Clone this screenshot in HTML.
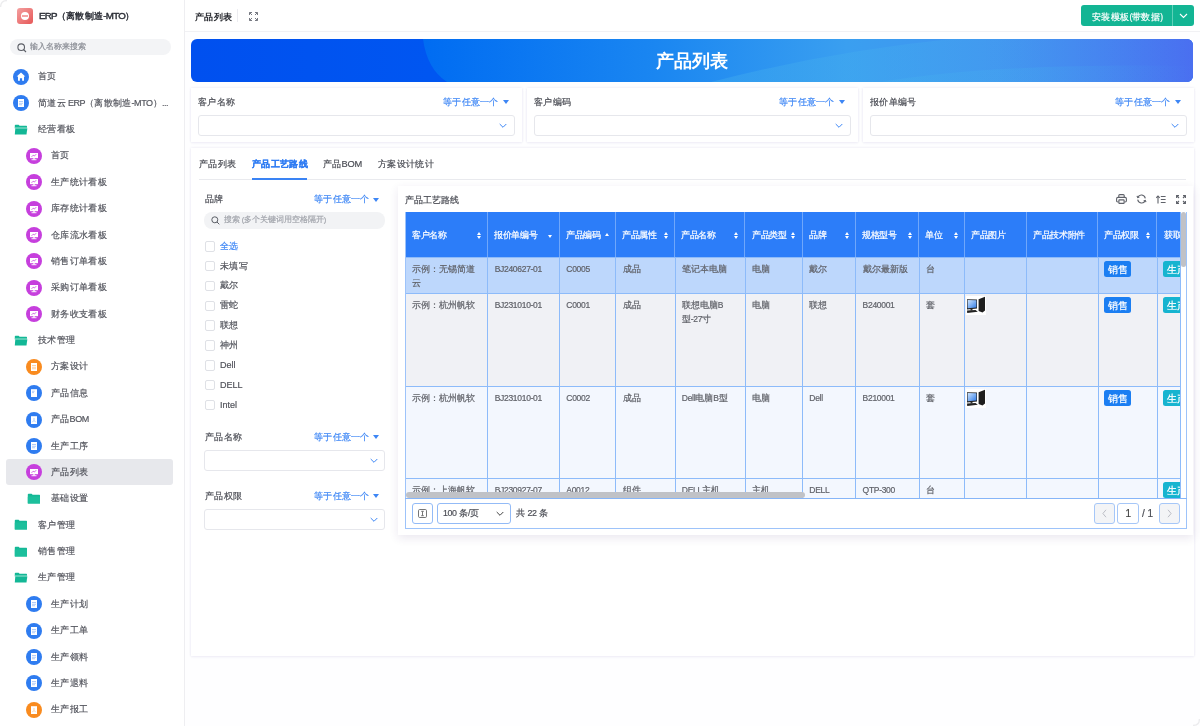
<!DOCTYPE html><html><head><meta charset="utf-8"><style>
*{margin:0;padding:0;box-sizing:border-box}
html,body{width:1200px;height:726px;overflow:hidden}
body{position:relative;background:#fefeff;font-family:"Liberation Sans",sans-serif;color:#4b4d55;font-size:10px;line-height:1;-webkit-text-stroke-width:.2px}
.a{position:absolute;white-space:nowrap}
.ic{position:absolute;width:16px;height:16px}
.card{position:absolute;background:#fff;box-shadow:0 0 2.5px rgba(90,70,160,.13),0 1px 3px rgba(90,70,160,.05)}
.tri{position:absolute;width:0;height:0;border-left:3.8px solid transparent;border-right:3.8px solid transparent;border-top:4.6px solid #3d86f5}
.inp{position:absolute;background:#fff;border:1px solid #e6e7ec;border-radius:3px}
.cb{position:absolute;width:10.5px;height:10.5px;border:1px solid #dfe1e6;border-radius:2px;background:#fff}
</style></head><body><div style="position:absolute;left:0;top:0;width:1200px;height:726px;will-change:transform">
<div class="a" style="left:0;top:0;width:185px;height:726px;background:#fff;border-right:1px solid #eeeef1"></div>
<div class="a" style="left:17px;top:8px;width:16px;height:16px;border-radius:3px;background:linear-gradient(135deg,#f4a0a0,#e65757)"></div>
<div class="a" style="left:20.8px;top:11.5px;width:8.4px;height:8.4px;border-radius:50%;background:#fff"></div>
<div class="a" style="left:22px;top:15px;width:6px;height:1.6px;background:#f3a5a5"></div>
<div class="a" style="left:38.5px;top:11px;font-size:10px;color:#2b2e36;font-weight:normal;transform:scale(0.93);transform-origin:0 0;-webkit-text-stroke-width:.45px"><span style="font-size:10.5px;letter-spacing:-0.8px">ERP</span>（离散制造<span style="font-size:10.5px;letter-spacing:-0.8px">-MTO</span>）</div>
<div class="a" style="left:10px;top:39px;width:161px;height:16px;border-radius:8px;background:#f3f4f6"></div>
<svg class="a" style="left:17px;top:43px" width="10" height="10" viewBox="0 0 10 10"><circle cx="4.2" cy="4.2" r="3.3" fill="none" stroke="#5b5e66" stroke-width="1.1"/><line x1="6.6" y1="6.6" x2="9" y2="9" stroke="#5b5e66" stroke-width="1.1"/></svg>
<div class="a" style="left:30px;top:43px;font-size:8px;color:#8a8d95;font-weight:normal;">输入名称来搜索</div>
<div class="ic" style="left:13px;top:68.80px"><svg width="16" height="16" viewBox="0 0 16 16"><circle cx="8" cy="8" r="8" fill="#2f7cf0"/><path d="M8 3.6 L12.3 7.6 H11 V11.8 H9.1 V9.3 H6.9 V11.8 H5 V7.6 H3.7 Z" fill="#fff"/></svg></div>
<div class="a" style="left:37.7px;top:72.3px;font-size:10px;color:#53555d;font-weight:normal;transform:scale(0.93);transform-origin:0 0;">首页</div>
<div class="ic" style="left:13px;top:95.17px"><svg width="16" height="16" viewBox="0 0 16 16"><circle cx="8" cy="8" r="8" fill="#2f7cf0"/><rect x="5" y="4" width="6" height="8" fill="#fff"/><rect x="6" y="6.2" width="4" height=".8" fill="#9fc0f7"/><rect x="6" y="7.8" width="4" height=".8" fill="#9fc0f7"/><rect x="6" y="9.4" width="3" height=".8" fill="#9fc0f7"/></svg></div>
<div class="a" style="left:37.7px;top:98.67px;font-size:10px;color:#53555d;font-weight:normal;transform:scale(0.93);transform-origin:0 0;">简道云<span style="font-size:9.7px;letter-spacing:-0.5px"> ERP</span>（离散制造<span style="font-size:9.7px;letter-spacing:-0.5px">-MTO</span>）<span style="font-size:9.7px;letter-spacing:-0.5px">...</span></div>
<div class="ic" style="left:13px;top:121.55px"><svg width="16" height="16" viewBox="0 0 16 16"><path d="M1.8 3.6 Q1.8 2.8 2.6 2.8 H5.6 L6.6 3.8 H13.4 Q14 3.8 14 4.4 V6.2 H1.8 Z" fill="#14b896"/><rect x="1.8" y="5.4" width="12.4" height="1.1" fill="#86dcca"/><path d="M2.3 6.5 H14.3 L13.5 12.5 H1.8 Z" fill="#13b796"/></svg></div>
<div class="a" style="left:37.7px;top:125.05px;font-size:10px;color:#53555d;font-weight:normal;transform:scale(0.93);transform-origin:0 0;">经营看板</div>
<div class="ic" style="left:26px;top:147.93px"><svg width="16" height="16" viewBox="0 0 16 16"><circle cx="8" cy="8" r="8" fill="#c63fdd"/><rect x="4" y="5" width="8" height="5.2" fill="#fff"/><rect x="7.2" y="10.2" width="1.6" height="1.4" fill="#fff"/><rect x="5.5" y="11.3" width="5" height=".9" fill="#fff"/><path d="M5.6 8.8 L7.2 7.2 L8.4 8 L10.2 6.2" stroke="#c63fdd" stroke-width=".8" fill="none"/></svg></div>
<div class="a" style="left:51.2px;top:151.43px;font-size:10px;color:#53555d;font-weight:normal;transform:scale(0.93);transform-origin:0 0;">首页</div>
<div class="ic" style="left:26px;top:174.30px"><svg width="16" height="16" viewBox="0 0 16 16"><circle cx="8" cy="8" r="8" fill="#c63fdd"/><rect x="4" y="5" width="8" height="5.2" fill="#fff"/><rect x="7.2" y="10.2" width="1.6" height="1.4" fill="#fff"/><rect x="5.5" y="11.3" width="5" height=".9" fill="#fff"/><path d="M5.6 8.8 L7.2 7.2 L8.4 8 L10.2 6.2" stroke="#c63fdd" stroke-width=".8" fill="none"/></svg></div>
<div class="a" style="left:51.2px;top:177.8px;font-size:10px;color:#53555d;font-weight:normal;transform:scale(0.93);transform-origin:0 0;">生产统计看板</div>
<div class="ic" style="left:26px;top:200.68px"><svg width="16" height="16" viewBox="0 0 16 16"><circle cx="8" cy="8" r="8" fill="#c63fdd"/><rect x="4" y="5" width="8" height="5.2" fill="#fff"/><rect x="7.2" y="10.2" width="1.6" height="1.4" fill="#fff"/><rect x="5.5" y="11.3" width="5" height=".9" fill="#fff"/><path d="M5.6 8.8 L7.2 7.2 L8.4 8 L10.2 6.2" stroke="#c63fdd" stroke-width=".8" fill="none"/></svg></div>
<div class="a" style="left:51.2px;top:204.18px;font-size:10px;color:#53555d;font-weight:normal;transform:scale(0.93);transform-origin:0 0;">库存统计看板</div>
<div class="ic" style="left:26px;top:227.05px"><svg width="16" height="16" viewBox="0 0 16 16"><circle cx="8" cy="8" r="8" fill="#c63fdd"/><rect x="4" y="5" width="8" height="5.2" fill="#fff"/><rect x="7.2" y="10.2" width="1.6" height="1.4" fill="#fff"/><rect x="5.5" y="11.3" width="5" height=".9" fill="#fff"/><path d="M5.6 8.8 L7.2 7.2 L8.4 8 L10.2 6.2" stroke="#c63fdd" stroke-width=".8" fill="none"/></svg></div>
<div class="a" style="left:51.2px;top:230.55px;font-size:10px;color:#53555d;font-weight:normal;transform:scale(0.93);transform-origin:0 0;">仓库流水看板</div>
<div class="ic" style="left:26px;top:253.43px"><svg width="16" height="16" viewBox="0 0 16 16"><circle cx="8" cy="8" r="8" fill="#c63fdd"/><rect x="4" y="5" width="8" height="5.2" fill="#fff"/><rect x="7.2" y="10.2" width="1.6" height="1.4" fill="#fff"/><rect x="5.5" y="11.3" width="5" height=".9" fill="#fff"/><path d="M5.6 8.8 L7.2 7.2 L8.4 8 L10.2 6.2" stroke="#c63fdd" stroke-width=".8" fill="none"/></svg></div>
<div class="a" style="left:51.2px;top:256.93px;font-size:10px;color:#53555d;font-weight:normal;transform:scale(0.93);transform-origin:0 0;">销售订单看板</div>
<div class="ic" style="left:26px;top:279.80px"><svg width="16" height="16" viewBox="0 0 16 16"><circle cx="8" cy="8" r="8" fill="#c63fdd"/><rect x="4" y="5" width="8" height="5.2" fill="#fff"/><rect x="7.2" y="10.2" width="1.6" height="1.4" fill="#fff"/><rect x="5.5" y="11.3" width="5" height=".9" fill="#fff"/><path d="M5.6 8.8 L7.2 7.2 L8.4 8 L10.2 6.2" stroke="#c63fdd" stroke-width=".8" fill="none"/></svg></div>
<div class="a" style="left:51.2px;top:283.3px;font-size:10px;color:#53555d;font-weight:normal;transform:scale(0.93);transform-origin:0 0;">采购订单看板</div>
<div class="ic" style="left:26px;top:306.18px"><svg width="16" height="16" viewBox="0 0 16 16"><circle cx="8" cy="8" r="8" fill="#c63fdd"/><rect x="4" y="5" width="8" height="5.2" fill="#fff"/><rect x="7.2" y="10.2" width="1.6" height="1.4" fill="#fff"/><rect x="5.5" y="11.3" width="5" height=".9" fill="#fff"/><path d="M5.6 8.8 L7.2 7.2 L8.4 8 L10.2 6.2" stroke="#c63fdd" stroke-width=".8" fill="none"/></svg></div>
<div class="a" style="left:51.2px;top:309.68px;font-size:10px;color:#53555d;font-weight:normal;transform:scale(0.93);transform-origin:0 0;">财务收支看板</div>
<div class="ic" style="left:13px;top:332.55px"><svg width="16" height="16" viewBox="0 0 16 16"><path d="M1.8 3.6 Q1.8 2.8 2.6 2.8 H5.6 L6.6 3.8 H13.4 Q14 3.8 14 4.4 V6.2 H1.8 Z" fill="#14b896"/><rect x="1.8" y="5.4" width="12.4" height="1.1" fill="#86dcca"/><path d="M2.3 6.5 H14.3 L13.5 12.5 H1.8 Z" fill="#13b796"/></svg></div>
<div class="a" style="left:37.7px;top:336.05px;font-size:10px;color:#53555d;font-weight:normal;transform:scale(0.93);transform-origin:0 0;">技术管理</div>
<div class="ic" style="left:26px;top:358.93px"><svg width="16" height="16" viewBox="0 0 16 16"><circle cx="8" cy="8" r="8" fill="#f98b1f"/><rect x="5" y="4" width="6" height="8" fill="#fff"/><rect x="6" y="6.2" width="4" height=".8" fill="#fcc58f"/><rect x="6" y="7.8" width="4" height=".8" fill="#fcc58f"/><rect x="6" y="9.4" width="4" height=".8" fill="#fcc58f"/></svg></div>
<div class="a" style="left:51.2px;top:362.43px;font-size:10px;color:#53555d;font-weight:normal;transform:scale(0.93);transform-origin:0 0;">方案设计</div>
<div class="ic" style="left:26px;top:385.30px"><svg width="16" height="16" viewBox="0 0 16 16"><circle cx="8" cy="8" r="8" fill="#2f7cf0"/><rect x="5" y="4.2" width="6" height="7.8" fill="#fff"/><rect x="6" y="5.8" width="2.6" height=".8" fill="#9fc0f7"/><rect x="6" y="7.3" width="2" height=".8" fill="#9fc0f7"/></svg></div>
<div class="a" style="left:51.2px;top:388.8px;font-size:10px;color:#53555d;font-weight:normal;transform:scale(0.93);transform-origin:0 0;">产品信息</div>
<div class="ic" style="left:26px;top:411.68px"><svg width="16" height="16" viewBox="0 0 16 16"><circle cx="8" cy="8" r="8" fill="#2f7cf0"/><rect x="5" y="4.2" width="6" height="7.8" fill="#fff"/><path d="M8 6 V8.4 M6.3 10.2 L8 8.4 L9.7 10.2" stroke="#9fc0f7" stroke-width=".8" fill="none"/></svg></div>
<div class="a" style="left:51.2px;top:415.18px;font-size:10px;color:#53555d;font-weight:normal;transform:scale(0.93);transform-origin:0 0;">产品<span style="font-size:9.7px;letter-spacing:-0.5px">BOM</span></div>
<div class="ic" style="left:26px;top:438.05px"><svg width="16" height="16" viewBox="0 0 16 16"><circle cx="8" cy="8" r="8" fill="#2f7cf0"/><rect x="5" y="4" width="6" height="8" fill="#fff"/><rect x="6" y="6.2" width="4" height=".8" fill="#9fc0f7"/><rect x="6" y="7.8" width="4" height=".8" fill="#9fc0f7"/><rect x="6" y="9.4" width="3" height=".8" fill="#9fc0f7"/></svg></div>
<div class="a" style="left:51.2px;top:441.55px;font-size:10px;color:#53555d;font-weight:normal;transform:scale(0.93);transform-origin:0 0;">生产工序</div>
<div class="a" style="left:5.5px;top:459.12px;width:167.5px;height:26px;border-radius:3px;background:#e7e8ec"></div>
<div class="ic" style="left:26px;top:464.43px"><svg width="16" height="16" viewBox="0 0 16 16"><circle cx="8" cy="8" r="8" fill="#c63fdd"/><rect x="4" y="5" width="8" height="5.2" fill="#fff"/><rect x="7.2" y="10.2" width="1.6" height="1.4" fill="#fff"/><rect x="5.5" y="11.3" width="5" height=".9" fill="#fff"/><path d="M5.6 8.8 L7.2 7.2 L8.4 8 L10.2 6.2" stroke="#c63fdd" stroke-width=".8" fill="none"/></svg></div>
<div class="a" style="left:51.2px;top:467.93px;font-size:10px;color:#53555d;font-weight:normal;transform:scale(0.93);transform-origin:0 0;">产品列表</div>
<div class="ic" style="left:26px;top:490.80px"><svg width="16" height="16" viewBox="0 0 16 16"><path d="M1.8 3.6 Q1.8 2.8 2.6 2.8 H5.6 L6.6 3.8 H13.4 Q14 3.8 14 4.4 V12.5 H1.8 Z" fill="#14b896"/><rect x="1.8" y="5.5" width="12.2" height="7" rx=".6" fill="#1cbf9c"/></svg></div>
<div class="a" style="left:51.2px;top:494.3px;font-size:10px;color:#53555d;font-weight:normal;transform:scale(0.93);transform-origin:0 0;">基础设置</div>
<div class="ic" style="left:13px;top:517.17px"><svg width="16" height="16" viewBox="0 0 16 16"><path d="M1.8 3.6 Q1.8 2.8 2.6 2.8 H5.6 L6.6 3.8 H13.4 Q14 3.8 14 4.4 V12.5 H1.8 Z" fill="#14b896"/><rect x="1.8" y="5.5" width="12.2" height="7" rx=".6" fill="#1cbf9c"/></svg></div>
<div class="a" style="left:37.7px;top:520.67px;font-size:10px;color:#53555d;font-weight:normal;transform:scale(0.93);transform-origin:0 0;">客户管理</div>
<div class="ic" style="left:13px;top:543.55px"><svg width="16" height="16" viewBox="0 0 16 16"><path d="M1.8 3.6 Q1.8 2.8 2.6 2.8 H5.6 L6.6 3.8 H13.4 Q14 3.8 14 4.4 V12.5 H1.8 Z" fill="#14b896"/><rect x="1.8" y="5.5" width="12.2" height="7" rx=".6" fill="#1cbf9c"/></svg></div>
<div class="a" style="left:37.7px;top:547.05px;font-size:10px;color:#53555d;font-weight:normal;transform:scale(0.93);transform-origin:0 0;">销售管理</div>
<div class="ic" style="left:13px;top:569.92px"><svg width="16" height="16" viewBox="0 0 16 16"><path d="M1.8 3.6 Q1.8 2.8 2.6 2.8 H5.6 L6.6 3.8 H13.4 Q14 3.8 14 4.4 V6.2 H1.8 Z" fill="#14b896"/><rect x="1.8" y="5.4" width="12.4" height="1.1" fill="#86dcca"/><path d="M2.3 6.5 H14.3 L13.5 12.5 H1.8 Z" fill="#13b796"/></svg></div>
<div class="a" style="left:37.7px;top:573.42px;font-size:10px;color:#53555d;font-weight:normal;transform:scale(0.93);transform-origin:0 0;">生产管理</div>
<div class="ic" style="left:26px;top:596.30px"><svg width="16" height="16" viewBox="0 0 16 16"><circle cx="8" cy="8" r="8" fill="#2f7cf0"/><rect x="5" y="4" width="6" height="8" fill="#fff"/><rect x="6" y="6.2" width="4" height=".8" fill="#9fc0f7"/><rect x="6" y="7.8" width="4" height=".8" fill="#9fc0f7"/><rect x="6" y="9.4" width="3" height=".8" fill="#9fc0f7"/></svg></div>
<div class="a" style="left:51.2px;top:599.8px;font-size:10px;color:#53555d;font-weight:normal;transform:scale(0.93);transform-origin:0 0;">生产计划</div>
<div class="ic" style="left:26px;top:622.67px"><svg width="16" height="16" viewBox="0 0 16 16"><circle cx="8" cy="8" r="8" fill="#2f7cf0"/><rect x="5" y="4" width="6" height="8" fill="#fff"/><rect x="6" y="6.2" width="4" height=".8" fill="#9fc0f7"/><rect x="6" y="7.8" width="4" height=".8" fill="#9fc0f7"/><rect x="6" y="9.4" width="3" height=".8" fill="#9fc0f7"/></svg></div>
<div class="a" style="left:51.2px;top:626.17px;font-size:10px;color:#53555d;font-weight:normal;transform:scale(0.93);transform-origin:0 0;">生产工单</div>
<div class="ic" style="left:26px;top:649.05px"><svg width="16" height="16" viewBox="0 0 16 16"><circle cx="8" cy="8" r="8" fill="#2f7cf0"/><rect x="5" y="4" width="6" height="8" fill="#fff"/><rect x="6" y="6.2" width="4" height=".8" fill="#9fc0f7"/><rect x="6" y="7.8" width="4" height=".8" fill="#9fc0f7"/><rect x="6" y="9.4" width="3" height=".8" fill="#9fc0f7"/></svg></div>
<div class="a" style="left:51.2px;top:652.55px;font-size:10px;color:#53555d;font-weight:normal;transform:scale(0.93);transform-origin:0 0;">生产领料</div>
<div class="ic" style="left:26px;top:675.42px"><svg width="16" height="16" viewBox="0 0 16 16"><circle cx="8" cy="8" r="8" fill="#2f7cf0"/><rect x="5" y="4" width="6" height="8" fill="#fff"/><rect x="6" y="6.2" width="4" height=".8" fill="#9fc0f7"/><rect x="6" y="7.8" width="4" height=".8" fill="#9fc0f7"/><rect x="6" y="9.4" width="3" height=".8" fill="#9fc0f7"/></svg></div>
<div class="a" style="left:51.2px;top:678.92px;font-size:10px;color:#53555d;font-weight:normal;transform:scale(0.93);transform-origin:0 0;">生产退料</div>
<div class="ic" style="left:26px;top:701.80px"><svg width="16" height="16" viewBox="0 0 16 16"><circle cx="8" cy="8" r="8" fill="#f98b1f"/><rect x="5" y="4.2" width="6" height="7.8" fill="#fff"/><path d="M8 6 V8.4 M6.3 10.2 L8 8.4 L9.7 10.2" stroke="#fcc58f" stroke-width=".8" fill="none"/></svg></div>
<div class="a" style="left:51.2px;top:705.3px;font-size:10px;color:#53555d;font-weight:normal;transform:scale(0.93);transform-origin:0 0;">生产报工</div>
<div class="a" style="left:185px;top:0;width:1015px;height:32px;background:#fff;border-bottom:1px solid #f1f1f4"></div>
<div class="a" style="left:195px;top:11.5px;font-size:10px;color:#26282e;font-weight:bold;transform:scale(0.94);transform-origin:0 0;-webkit-text-stroke-width:0">产品列表</div>
<div class="a" style="left:237px;top:9px;width:1px;height:13px;background:#ececf0"></div>
<svg class="a" style="left:249px;top:11.5px" width="9" height="9" viewBox="0 0 9 9" fill="none" stroke="#777a82" stroke-width="1"><path d="M.5 3V.5H3M6 .5h2.5V3M8.5 6v2.5H6M3 8.5H.5V6"/><path d="M.5 .5 3 3M8.5 .5 6 3M8.5 8.5 6 6M.5 8.5 3 6"/></svg>
<div class="a" style="left:1081px;top:5px;width:112.5px;height:21px;border-radius:3px;background:#13b594"></div>
<div class="a" style="left:1172px;top:5px;width:1px;height:21px;background:#5fd0b8"></div>
<div class="a" style="left:1092px;top:12px;font-size:10px;color:#fff;font-weight:normal;transform:scale(0.94);transform-origin:0 0;">安装模板<span style="font-size:9px;letter-spacing:-0.4px">(</span>带数据<span style="font-size:9px;letter-spacing:-0.4px">)</span></div>
<svg class="a" style="left:1179px;top:13px" width="9" height="6" viewBox="0 0 9 6"><path d="M1 1 4.5 4.5 8 1" stroke="#fff" stroke-width="1.1" fill="none"/></svg>
<svg class="a" style="left:191px;top:39px" width="1002" height="43" viewBox="0 0 1002 43"><defs><clipPath id="bc"><rect width="1002" height="43" rx="6"/></clipPath><linearGradient id="bg1" x1="0" y1="0" x2="1" y2="0"><stop offset="0" stop-color="#0050ef"/><stop offset=".24" stop-color="#0056f1"/><stop offset="1" stop-color="#0060f2"/></linearGradient><linearGradient id="bg2" x1="0" y1="0" x2="1" y2="0"><stop offset="0" stop-color="#006cf2"/><stop offset=".3" stop-color="#1a86f1"/><stop offset=".55" stop-color="#3a9ff0"/><stop offset=".75" stop-color="#4292f0"/><stop offset="1" stop-color="#4a6ff0"/></linearGradient><linearGradient id="bg3" x1="0" y1="0" x2="1" y2="0"><stop offset="0" stop-color="#45b0ee" stop-opacity=".7"/><stop offset=".5" stop-color="#45b0ee" stop-opacity=".5"/><stop offset="1" stop-color="#45b0ee" stop-opacity="0"/></linearGradient></defs><g clip-path="url(#bc)"><rect width="1002" height="43" fill="url(#bg1)"/><path d="M232 0 Q236 30 256 43 H1002 V0 Z" fill="url(#bg2)"/><path d="M520 43 Q640 12 760 0 H1002 V43 Z" fill="url(#bg3)" opacity=".55"/><path d="M690 43 Q800 24 1002 27 V43 Z" fill="url(#bg3)" opacity=".45"/></g></svg>
<div class="a" style="left:656px;top:51.5px;font-size:18px;color:#fff;font-weight:bold;-webkit-text-stroke-width:0">产品列表</div>
<div class="card" style="left:191px;top:88px;width:330.5px;height:53.5px"></div>
<div class="a" style="left:198px;top:98px;font-size:10px;color:#4b4d55;font-weight:normal;transform:scale(0.93);transform-origin:0 0;">客户名称</div>
<div class="a" style="left:443px;top:98px;font-size:10px;color:#3d86f5;font-weight:normal;transform:scale(0.925);transform-origin:0 0;">等于任意一个</div>
<div class="tri" style="left:502.5px;top:100px"></div>
<div class="inp" style="left:198px;top:115px;width:316.5px;height:20.5px"></div>
<svg class="a" style="left:499px;top:122.5px" width="8" height="6" viewBox="0 0 8 6"><path d="M.7 1 4 4.3 7.3 1" stroke="#3d86f5" stroke-width="1" fill="none"/></svg>
<div class="card" style="left:527px;top:88px;width:330.5px;height:53.5px"></div>
<div class="a" style="left:534px;top:98px;font-size:10px;color:#4b4d55;font-weight:normal;transform:scale(0.93);transform-origin:0 0;">客户编码</div>
<div class="a" style="left:779px;top:98px;font-size:10px;color:#3d86f5;font-weight:normal;transform:scale(0.925);transform-origin:0 0;">等于任意一个</div>
<div class="tri" style="left:838.5px;top:100px"></div>
<div class="inp" style="left:534px;top:115px;width:316.5px;height:20.5px"></div>
<svg class="a" style="left:835px;top:122.5px" width="8" height="6" viewBox="0 0 8 6"><path d="M.7 1 4 4.3 7.3 1" stroke="#3d86f5" stroke-width="1" fill="none"/></svg>
<div class="card" style="left:863px;top:88px;width:330.5px;height:53.5px"></div>
<div class="a" style="left:870px;top:98px;font-size:10px;color:#4b4d55;font-weight:normal;transform:scale(0.93);transform-origin:0 0;">报价单编号</div>
<div class="a" style="left:1115px;top:98px;font-size:10px;color:#3d86f5;font-weight:normal;transform:scale(0.925);transform-origin:0 0;">等于任意一个</div>
<div class="tri" style="left:1174.5px;top:100px"></div>
<div class="inp" style="left:870px;top:115px;width:316.5px;height:20.5px"></div>
<svg class="a" style="left:1171px;top:122.5px" width="8" height="6" viewBox="0 0 8 6"><path d="M.7 1 4 4.3 7.3 1" stroke="#3d86f5" stroke-width="1" fill="none"/></svg>
<div class="card" style="left:191px;top:147.5px;width:1002.5px;height:508.5px"></div>
<div class="a" style="left:199px;top:178.5px;width:987px;height:1px;background:#e9eaee"></div>
<div class="a" style="left:199px;top:159.5px;font-size:10px;color:#4b4d55;font-weight:normal;transform:scale(0.93);transform-origin:0 0;">产品列表</div>
<div class="a" style="left:252px;top:159.5px;font-size:10px;color:#2f7cf3;font-weight:bold;transform:scale(0.93);transform-origin:0 0;">产品工艺路线</div>
<div class="a" style="left:252px;top:177.5px;width:55px;height:2px;background:#3a83f4"></div>
<div class="a" style="left:323px;top:159.5px;font-size:10px;color:#4b4d55;font-weight:normal;transform:scale(0.93);transform-origin:0 0;">产品<span style="font-size:10px;letter-spacing:-0.3px">BOM</span></div>
<div class="a" style="left:378px;top:159.5px;font-size:10px;color:#4b4d55;font-weight:normal;transform:scale(0.93);transform-origin:0 0;">方案设计统计</div>
<div class="a" style="left:204.5px;top:195px;font-size:10px;color:#4b4d55;font-weight:normal;transform:scale(0.93);transform-origin:0 0;">品牌</div>
<div class="a" style="left:314px;top:195px;font-size:10px;color:#3d86f5;font-weight:normal;transform:scale(0.925);transform-origin:0 0;">等于任意一个</div>
<div class="tri" style="left:373px;top:197.5px"></div>
<div class="a" style="left:204px;top:212px;width:181px;height:16.5px;border-radius:8px;background:#f2f3f5"></div>
<svg class="a" style="left:210.5px;top:215.5px" width="9" height="9" viewBox="0 0 9 9"><circle cx="3.8" cy="3.8" r="3" fill="none" stroke="#5b5e66" stroke-width="1"/><line x1="6" y1="6" x2="8.3" y2="8.3" stroke="#5b5e66" stroke-width="1"/></svg>
<div class="a" style="left:224px;top:216px;font-size:8px;color:#a3a6ad;font-weight:normal;">搜索<span style="font-size:7.5px;letter-spacing:-0.4px"> (</span>多个关键词用空格隔开<span style="font-size:7.5px;letter-spacing:-0.4px">)</span></div>
<div class="cb" style="left:204.5px;top:241.00px"></div>
<div class="a" style="left:220px;top:241.7px;font-size:10px;color:#3d86f5;font-weight:normal;transform:scale(0.93);transform-origin:0 0;">全选</div>
<div class="cb" style="left:204.5px;top:260.85px"></div>
<div class="a" style="left:220px;top:261.55px;font-size:10px;color:#50525a;font-weight:normal;transform:scale(0.93);transform-origin:0 0;">未填写</div>
<div class="cb" style="left:204.5px;top:280.70px"></div>
<div class="a" style="left:220px;top:281.4px;font-size:10px;color:#50525a;font-weight:normal;transform:scale(0.93);transform-origin:0 0;">戴尔</div>
<div class="cb" style="left:204.5px;top:300.55px"></div>
<div class="a" style="left:220px;top:301.25px;font-size:10px;color:#50525a;font-weight:normal;transform:scale(0.93);transform-origin:0 0;">雷蛇</div>
<div class="cb" style="left:204.5px;top:320.40px"></div>
<div class="a" style="left:220px;top:321.1px;font-size:10px;color:#50525a;font-weight:normal;transform:scale(0.93);transform-origin:0 0;">联想</div>
<div class="cb" style="left:204.5px;top:340.25px"></div>
<div class="a" style="left:220px;top:340.95px;font-size:10px;color:#50525a;font-weight:normal;transform:scale(0.93);transform-origin:0 0;">神州</div>
<div class="cb" style="left:204.5px;top:360.10px"></div>
<div class="a" style="left:220px;top:360.8px;font-size:10px;color:#50525a;font-weight:normal;transform:scale(0.93);transform-origin:0 0;"><span style="font-size:9.7px;letter-spacing:0px">Dell</span></div>
<div class="cb" style="left:204.5px;top:379.95px"></div>
<div class="a" style="left:220px;top:380.65px;font-size:10px;color:#50525a;font-weight:normal;transform:scale(0.93);transform-origin:0 0;"><span style="font-size:9.7px;letter-spacing:0px">DELL</span></div>
<div class="cb" style="left:204.5px;top:399.80px"></div>
<div class="a" style="left:220px;top:400.5px;font-size:10px;color:#50525a;font-weight:normal;transform:scale(0.93);transform-origin:0 0;"><span style="font-size:9.7px;letter-spacing:0px">Intel</span></div>
<div class="a" style="left:204.5px;top:432.5px;font-size:10px;color:#4b4d55;font-weight:normal;transform:scale(0.93);transform-origin:0 0;">产品名称</div>
<div class="a" style="left:314px;top:432.5px;font-size:10px;color:#3d86f5;font-weight:normal;transform:scale(0.925);transform-origin:0 0;">等于任意一个</div>
<div class="tri" style="left:373px;top:435px"></div>
<div class="inp" style="left:204px;top:450px;width:181px;height:21px"></div>
<svg class="a" style="left:370px;top:458px" width="8" height="6" viewBox="0 0 8 6"><path d="M.7 1 4 4.3 7.3 1" stroke="#3d86f5" stroke-width="1" fill="none"/></svg>
<div class="a" style="left:204.5px;top:491.5px;font-size:10px;color:#4b4d55;font-weight:normal;transform:scale(0.93);transform-origin:0 0;">产品权限</div>
<div class="a" style="left:314px;top:491.5px;font-size:10px;color:#3d86f5;font-weight:normal;transform:scale(0.925);transform-origin:0 0;">等于任意一个</div>
<div class="tri" style="left:373px;top:494px"></div>
<div class="inp" style="left:204px;top:509px;width:181px;height:21px"></div>
<svg class="a" style="left:370px;top:517px" width="8" height="6" viewBox="0 0 8 6"><path d="M.7 1 4 4.3 7.3 1" stroke="#3d86f5" stroke-width="1" fill="none"/></svg>
<div class="card" style="left:398px;top:186px;width:794.5px;height:349px;box-shadow:0 3px 9px rgba(60,40,110,.11)"></div>
<div class="a" style="left:405px;top:195.5px;font-size:9px;color:#4b4d55;font-weight:normal;">产品工艺路线</div>
<svg class="a" style="left:1115.5px;top:194px" width="11" height="10" viewBox="0 0 11 10" fill="none" stroke="#5f626a" stroke-width="1.1"><path d="M2.8 3.4V1.6Q2.8 .6 3.8 .6h3.4q1 0 1 1v1.8"/><path d="M2.6 8H1.8Q.6 8 .6 6.8V4.8Q.6 3.4 2 3.4h7q1.4 0 1.4 1.4v2Q10.4 8 9.2 8H8.4"/><rect x="2.9" y="5.9" width="5.2" height="3.5" rx=".4"/></svg>
<svg class="a" style="left:1135.5px;top:194px" width="11" height="10" viewBox="0 0 11 10" fill="none" stroke="#5f626a" stroke-width="1.1"><path d="M9.3 4.3A4 4 0 0 0 1.8 3.2"/><path d="M1.7 5.7A4 4 0 0 0 9.2 6.8"/><path d="M1 1.9 1.7 3.6 3.4 3" /><path d="M10 8.1 9.3 6.4 7.6 7"/></svg>
<svg class="a" style="left:1155.5px;top:194.5px" width="10" height="9" viewBox="0 0 10 9" fill="none" stroke="#5f626a" stroke-width="1.1"><path d="M2 8.4V1"/><path d="M.3 2.8 2 1.1l1.7 1.7"/><path d="M4.8 1.5h4.8M4.8 4.5h4.8M4.8 7.5h4.8"/></svg>
<svg class="a" style="left:1175.5px;top:194.5px" width="10" height="9" viewBox="0 0 10 9" fill="none" stroke="#5f626a" stroke-width="1.1"><path d="M.6 3V.6H3M7 .6h2.4V3M9.4 6v2.4H7M3 8.4H.6V6"/><path d="M.8 .8 3 3M9.2 .8 7 3M9.2 8.2 7 6M.8 8.2 3 6"/></svg>
<div class="a" style="left:405px;top:212px;width:776px;height:286px;overflow:hidden;background:#fff">
<div style="position:absolute;left:0;top:0;width:776px;height:45px;background:#2c7df9"></div>
<div class="a" style="left:6.8px;top:19px;font-size:9px;color:#fff;font-weight:normal;transform:scale(0.96);transform-origin:0 0;">客户名称</div>
<div style="position:absolute;left:71.69999999999997px;top:19.6px;width:0;height:0;border-left:2.5px solid transparent;border-right:2.5px solid transparent;border-bottom:3px solid #fff"></div>
<div style="position:absolute;left:71.69999999999997px;top:23.8px;width:0;height:0;border-left:2.5px solid transparent;border-right:2.5px solid transparent;border-top:3px solid #fff"></div>
<div style="position:absolute;left:81.89999999999998px;top:0;width:1px;height:45px;background:#6fa7fb"></div>
<div class="a" style="left:89.2px;top:19px;font-size:9px;color:#fff;font-weight:normal;transform:scale(0.96);transform-origin:0 0;">报价单编号</div>
<div style="position:absolute;left:143.3px;top:23px;width:0;height:0;border-left:2.5px solid transparent;border-right:2.5px solid transparent;border-top:3px solid #fff"></div>
<div style="position:absolute;left:153.5px;top:0;width:1px;height:45px;background:#6fa7fb"></div>
<div class="a" style="left:160.8px;top:19px;font-size:9px;color:#fff;font-weight:normal;transform:scale(0.96);transform-origin:0 0;">产品编码</div>
<div style="position:absolute;left:199.59999999999997px;top:21px;width:0;height:0;border-left:2.5px solid transparent;border-right:2.5px solid transparent;border-bottom:3px solid #fff"></div>
<div style="position:absolute;left:209.79999999999995px;top:0;width:1px;height:45px;background:#6fa7fb"></div>
<div class="a" style="left:217.1px;top:19px;font-size:9px;color:#fff;font-weight:normal;transform:scale(0.96);transform-origin:0 0;">产品属性</div>
<div style="position:absolute;left:258.8px;top:19.6px;width:0;height:0;border-left:2.5px solid transparent;border-right:2.5px solid transparent;border-bottom:3px solid #fff"></div>
<div style="position:absolute;left:258.8px;top:23.8px;width:0;height:0;border-left:2.5px solid transparent;border-right:2.5px solid transparent;border-top:3px solid #fff"></div>
<div style="position:absolute;left:269.0px;top:0;width:1px;height:45px;background:#6fa7fb"></div>
<div class="a" style="left:276.3px;top:19px;font-size:9px;color:#fff;font-weight:normal;transform:scale(0.96);transform-origin:0 0;">产品名称</div>
<div style="position:absolute;left:329.00000000000006px;top:19.6px;width:0;height:0;border-left:2.5px solid transparent;border-right:2.5px solid transparent;border-bottom:3px solid #fff"></div>
<div style="position:absolute;left:329.00000000000006px;top:23.8px;width:0;height:0;border-left:2.5px solid transparent;border-right:2.5px solid transparent;border-top:3px solid #fff"></div>
<div style="position:absolute;left:339.20000000000005px;top:0;width:1px;height:45px;background:#6fa7fb"></div>
<div class="a" style="left:346.5px;top:19px;font-size:9px;color:#fff;font-weight:normal;transform:scale(0.96);transform-origin:0 0;">产品类型</div>
<div style="position:absolute;left:386.3px;top:19.6px;width:0;height:0;border-left:2.5px solid transparent;border-right:2.5px solid transparent;border-bottom:3px solid #fff"></div>
<div style="position:absolute;left:386.3px;top:23.8px;width:0;height:0;border-left:2.5px solid transparent;border-right:2.5px solid transparent;border-top:3px solid #fff"></div>
<div style="position:absolute;left:396.5px;top:0;width:1px;height:45px;background:#6fa7fb"></div>
<div class="a" style="left:403.8px;top:19px;font-size:9px;color:#fff;font-weight:normal;transform:scale(0.96);transform-origin:0 0;">品牌</div>
<div style="position:absolute;left:439.59999999999997px;top:19.6px;width:0;height:0;border-left:2.5px solid transparent;border-right:2.5px solid transparent;border-bottom:3px solid #fff"></div>
<div style="position:absolute;left:439.59999999999997px;top:23.8px;width:0;height:0;border-left:2.5px solid transparent;border-right:2.5px solid transparent;border-top:3px solid #fff"></div>
<div style="position:absolute;left:449.79999999999995px;top:0;width:1px;height:45px;background:#6fa7fb"></div>
<div class="a" style="left:457.1px;top:19px;font-size:9px;color:#fff;font-weight:normal;transform:scale(0.96);transform-origin:0 0;">规格型号</div>
<div style="position:absolute;left:502.8px;top:19.6px;width:0;height:0;border-left:2.5px solid transparent;border-right:2.5px solid transparent;border-bottom:3px solid #fff"></div>
<div style="position:absolute;left:502.8px;top:23.8px;width:0;height:0;border-left:2.5px solid transparent;border-right:2.5px solid transparent;border-top:3px solid #fff"></div>
<div style="position:absolute;left:513.0px;top:0;width:1px;height:45px;background:#6fa7fb"></div>
<div class="a" style="left:520.3px;top:19px;font-size:9px;color:#fff;font-weight:normal;transform:scale(0.96);transform-origin:0 0;">单位</div>
<div style="position:absolute;left:548.6999999999999px;top:19.6px;width:0;height:0;border-left:2.5px solid transparent;border-right:2.5px solid transparent;border-bottom:3px solid #fff"></div>
<div style="position:absolute;left:548.6999999999999px;top:23.8px;width:0;height:0;border-left:2.5px solid transparent;border-right:2.5px solid transparent;border-top:3px solid #fff"></div>
<div style="position:absolute;left:558.9px;top:0;width:1px;height:45px;background:#6fa7fb"></div>
<div class="a" style="left:566.2px;top:19px;font-size:9px;color:#fff;font-weight:normal;transform:scale(0.96);transform-origin:0 0;">产品图片</div>
<div style="position:absolute;left:620.8px;top:0;width:1px;height:45px;background:#6fa7fb"></div>
<div class="a" style="left:628.1px;top:19px;font-size:9px;color:#fff;font-weight:normal;transform:scale(0.96);transform-origin:0 0;">产品技术附件</div>
<div style="position:absolute;left:692.0px;top:0;width:1px;height:45px;background:#6fa7fb"></div>
<div class="a" style="left:699.3px;top:19px;font-size:9px;color:#fff;font-weight:normal;transform:scale(0.96);transform-origin:0 0;">产品权限</div>
<div style="position:absolute;left:741.0999999999999px;top:19.6px;width:0;height:0;border-left:2.5px solid transparent;border-right:2.5px solid transparent;border-bottom:3px solid #fff"></div>
<div style="position:absolute;left:741.0999999999999px;top:23.8px;width:0;height:0;border-left:2.5px solid transparent;border-right:2.5px solid transparent;border-top:3px solid #fff"></div>
<div style="position:absolute;left:751.3px;top:0;width:1px;height:45px;background:#6fa7fb"></div>
<div class="a" style="left:758.6px;top:19px;font-size:9px;color:#fff;font-weight:normal;transform:scale(0.96);transform-origin:0 0;">获取方式</div>
<div style="position:absolute;left:824.3px;top:19.6px;width:0;height:0;border-left:2.5px solid transparent;border-right:2.5px solid transparent;border-bottom:3px solid #fff"></div>
<div style="position:absolute;left:824.3px;top:23.8px;width:0;height:0;border-left:2.5px solid transparent;border-right:2.5px solid transparent;border-top:3px solid #fff"></div>
<div style="position:absolute;left:0;top:45px;width:776px;height:36.3px;background:#bdd7fc;border-top:1px solid #8dbbfa"></div>
<div style="position:absolute;left:0px;top:45px;width:1px;height:36.3px;background:#8dbbfa"></div>
<div class="a" style="left:7.3px;top:53.0px;font-size:9px;color:#606269;font-weight:normal;">示例：无锡简道</div>
<div class="a" style="left:7.3px;top:66.5px;font-size:9px;color:#606269;font-weight:normal;">云</div>
<div style="position:absolute;left:82.39999999999998px;top:45px;width:1px;height:36.3px;background:#8dbbfa"></div>
<div class="a" style="left:89.7px;top:53.0px;font-size:9px;color:#606269;font-weight:normal;"><span style="font-size:8.5px;letter-spacing:-0.3px">BJ240627-01</span></div>
<div style="position:absolute;left:154px;top:45px;width:1px;height:36.3px;background:#8dbbfa"></div>
<div class="a" style="left:161.3px;top:53.0px;font-size:9px;color:#606269;font-weight:normal;"><span style="font-size:8.5px;letter-spacing:-0.3px">C0005</span></div>
<div style="position:absolute;left:210.29999999999995px;top:45px;width:1px;height:36.3px;background:#8dbbfa"></div>
<div class="a" style="left:217.6px;top:53.0px;font-size:9px;color:#606269;font-weight:normal;">成品</div>
<div style="position:absolute;left:269.5px;top:45px;width:1px;height:36.3px;background:#8dbbfa"></div>
<div class="a" style="left:276.8px;top:53.0px;font-size:9px;color:#606269;font-weight:normal;">笔记本电脑</div>
<div style="position:absolute;left:339.70000000000005px;top:45px;width:1px;height:36.3px;background:#8dbbfa"></div>
<div class="a" style="left:347.0px;top:53.0px;font-size:9px;color:#606269;font-weight:normal;">电脑</div>
<div style="position:absolute;left:397px;top:45px;width:1px;height:36.3px;background:#8dbbfa"></div>
<div class="a" style="left:404.3px;top:53.0px;font-size:9px;color:#606269;font-weight:normal;">戴尔</div>
<div style="position:absolute;left:450.29999999999995px;top:45px;width:1px;height:36.3px;background:#8dbbfa"></div>
<div class="a" style="left:457.6px;top:53.0px;font-size:9px;color:#606269;font-weight:normal;">戴尔最新版</div>
<div style="position:absolute;left:513.5px;top:45px;width:1px;height:36.3px;background:#8dbbfa"></div>
<div class="a" style="left:520.8px;top:53.0px;font-size:9px;color:#606269;font-weight:normal;">台</div>
<div style="position:absolute;left:559.4px;top:45px;width:1px;height:36.3px;background:#8dbbfa"></div>
<div style="position:absolute;left:621.3px;top:45px;width:1px;height:36.3px;background:#8dbbfa"></div>
<div style="position:absolute;left:692.5px;top:45px;width:1px;height:36.3px;background:#8dbbfa"></div>
<div style="position:absolute;left:699.0px;top:49px;width:27px;height:16px;border-radius:2.5px;background:#1b7ef2"></div>
<div class="a" style="left:703.0px;top:53px;font-size:10px;color:#fff;font-weight:normal;transform:scale(0.95);transform-origin:0 0;">销售</div>
<div style="position:absolute;left:751.8px;top:45px;width:1px;height:36.3px;background:#8dbbfa"></div>
<div style="position:absolute;left:758.3px;top:49px;width:27px;height:16px;border-radius:2.5px;background:#16b4d0"></div>
<div class="a" style="left:762.3px;top:53px;font-size:10px;color:#fff;font-weight:normal;transform:scale(0.95);transform-origin:0 0;">生产</div>
<div style="position:absolute;left:0;top:81.30000000000001px;width:776px;height:93px;background:#f0f1f5;border-top:1px solid #8dbbfa"></div>
<div style="position:absolute;left:0px;top:81.30000000000001px;width:1px;height:93px;background:#8dbbfa"></div>
<div class="a" style="left:7.3px;top:89.3px;font-size:9px;color:#606269;font-weight:normal;">示例：杭州帆软</div>
<div style="position:absolute;left:82.39999999999998px;top:81.30000000000001px;width:1px;height:93px;background:#8dbbfa"></div>
<div class="a" style="left:89.7px;top:89.3px;font-size:9px;color:#606269;font-weight:normal;"><span style="font-size:8.5px;letter-spacing:-0.3px">BJ231010-01</span></div>
<div style="position:absolute;left:154px;top:81.30000000000001px;width:1px;height:93px;background:#8dbbfa"></div>
<div class="a" style="left:161.3px;top:89.3px;font-size:9px;color:#606269;font-weight:normal;"><span style="font-size:8.5px;letter-spacing:-0.3px">C0001</span></div>
<div style="position:absolute;left:210.29999999999995px;top:81.30000000000001px;width:1px;height:93px;background:#8dbbfa"></div>
<div class="a" style="left:217.6px;top:89.3px;font-size:9px;color:#606269;font-weight:normal;">成品</div>
<div style="position:absolute;left:269.5px;top:81.30000000000001px;width:1px;height:93px;background:#8dbbfa"></div>
<div class="a" style="left:276.8px;top:89.3px;font-size:9px;color:#606269;font-weight:normal;">联想电脑<span style="font-size:8.5px;letter-spacing:-0.3px">B</span></div>
<div class="a" style="left:276.8px;top:102.8px;font-size:9px;color:#606269;font-weight:normal;">型<span style="font-size:8.5px;letter-spacing:-0.3px">-27</span>寸</div>
<div style="position:absolute;left:339.70000000000005px;top:81.30000000000001px;width:1px;height:93px;background:#8dbbfa"></div>
<div class="a" style="left:347.0px;top:89.3px;font-size:9px;color:#606269;font-weight:normal;">电脑</div>
<div style="position:absolute;left:397px;top:81.30000000000001px;width:1px;height:93px;background:#8dbbfa"></div>
<div class="a" style="left:404.3px;top:89.3px;font-size:9px;color:#606269;font-weight:normal;">联想</div>
<div style="position:absolute;left:450.29999999999995px;top:81.30000000000001px;width:1px;height:93px;background:#8dbbfa"></div>
<div class="a" style="left:457.6px;top:89.3px;font-size:9px;color:#606269;font-weight:normal;"><span style="font-size:8.5px;letter-spacing:-0.3px">B240001</span></div>
<div style="position:absolute;left:513.5px;top:81.30000000000001px;width:1px;height:93px;background:#8dbbfa"></div>
<div class="a" style="left:520.8px;top:89.3px;font-size:9px;color:#606269;font-weight:normal;">套</div>
<div style="position:absolute;left:559.4px;top:81.30000000000001px;width:1px;height:93px;background:#8dbbfa"></div>
<div style="position:absolute;left:560.6px;top:83.50000000000001px;width:20px;height:19px"><svg width="20" height="19" viewBox="0 0 20 19"><rect width="20" height="19" fill="#fff"/><defs><linearGradient id="mg" x1="0" y1="0" x2="1" y2="1"><stop offset="0" stop-color="#cfe6ff"/><stop offset="1" stop-color="#2f7be8"/></linearGradient></defs><path d="M1 3.2 L11 3.6 V12.6 L1 13.4 Z" fill="#222"/><path d="M1.6 4 L10.4 4.3 V11.6 L1.6 12.3 Z" fill="url(#mg)"/><rect x="4.5" y="13" width="2" height="1.5" fill="#333"/><path d="M1 14.6 L9.5 14 L11.8 15.8 L1.2 17 Z" fill="#222"/><path d="M12.6 3.2 L19 .8 V14.6 L16.5 16.4 L12.6 15 Z" fill="#1e1e1e"/></svg></div>
<div style="position:absolute;left:621.3px;top:81.30000000000001px;width:1px;height:93px;background:#8dbbfa"></div>
<div style="position:absolute;left:692.5px;top:81.30000000000001px;width:1px;height:93px;background:#8dbbfa"></div>
<div style="position:absolute;left:699.0px;top:85.30000000000001px;width:27px;height:16px;border-radius:2.5px;background:#1b7ef2"></div>
<div class="a" style="left:703.0px;top:89.30000000000001px;font-size:10px;color:#fff;font-weight:normal;transform:scale(0.95);transform-origin:0 0;">销售</div>
<div style="position:absolute;left:751.8px;top:81.30000000000001px;width:1px;height:93px;background:#8dbbfa"></div>
<div style="position:absolute;left:758.3px;top:85.30000000000001px;width:27px;height:16px;border-radius:2.5px;background:#16b4d0"></div>
<div class="a" style="left:762.3px;top:89.30000000000001px;font-size:10px;color:#fff;font-weight:normal;transform:scale(0.95);transform-origin:0 0;">生产</div>
<div style="position:absolute;left:0;top:174.3px;width:776px;height:92px;background:#f3f7fe;border-top:1px solid #8dbbfa"></div>
<div style="position:absolute;left:0px;top:174.3px;width:1px;height:92px;background:#8dbbfa"></div>
<div class="a" style="left:7.3px;top:182.3px;font-size:9px;color:#606269;font-weight:normal;">示例：杭州帆软</div>
<div style="position:absolute;left:82.39999999999998px;top:174.3px;width:1px;height:92px;background:#8dbbfa"></div>
<div class="a" style="left:89.7px;top:182.3px;font-size:9px;color:#606269;font-weight:normal;"><span style="font-size:8.5px;letter-spacing:-0.3px">BJ231010-01</span></div>
<div style="position:absolute;left:154px;top:174.3px;width:1px;height:92px;background:#8dbbfa"></div>
<div class="a" style="left:161.3px;top:182.3px;font-size:9px;color:#606269;font-weight:normal;"><span style="font-size:8.5px;letter-spacing:-0.3px">C0002</span></div>
<div style="position:absolute;left:210.29999999999995px;top:174.3px;width:1px;height:92px;background:#8dbbfa"></div>
<div class="a" style="left:217.6px;top:182.3px;font-size:9px;color:#606269;font-weight:normal;">成品</div>
<div style="position:absolute;left:269.5px;top:174.3px;width:1px;height:92px;background:#8dbbfa"></div>
<div class="a" style="left:276.8px;top:182.3px;font-size:9px;color:#606269;font-weight:normal;"><span style="font-size:8.5px;letter-spacing:-0.3px">Dell</span>电脑<span style="font-size:8.5px;letter-spacing:-0.3px">B</span>型</div>
<div style="position:absolute;left:339.70000000000005px;top:174.3px;width:1px;height:92px;background:#8dbbfa"></div>
<div class="a" style="left:347.0px;top:182.3px;font-size:9px;color:#606269;font-weight:normal;">电脑</div>
<div style="position:absolute;left:397px;top:174.3px;width:1px;height:92px;background:#8dbbfa"></div>
<div class="a" style="left:404.3px;top:182.3px;font-size:9px;color:#606269;font-weight:normal;"><span style="font-size:8.5px;letter-spacing:-0.3px">Dell</span></div>
<div style="position:absolute;left:450.29999999999995px;top:174.3px;width:1px;height:92px;background:#8dbbfa"></div>
<div class="a" style="left:457.6px;top:182.3px;font-size:9px;color:#606269;font-weight:normal;"><span style="font-size:8.5px;letter-spacing:-0.3px">B210001</span></div>
<div style="position:absolute;left:513.5px;top:174.3px;width:1px;height:92px;background:#8dbbfa"></div>
<div class="a" style="left:520.8px;top:182.3px;font-size:9px;color:#606269;font-weight:normal;">套</div>
<div style="position:absolute;left:559.4px;top:174.3px;width:1px;height:92px;background:#8dbbfa"></div>
<div style="position:absolute;left:560.6px;top:176.5px;width:20px;height:19px"><svg width="20" height="19" viewBox="0 0 20 19"><rect width="20" height="19" fill="#fff"/><defs><linearGradient id="mg" x1="0" y1="0" x2="1" y2="1"><stop offset="0" stop-color="#cfe6ff"/><stop offset="1" stop-color="#2f7be8"/></linearGradient></defs><path d="M1 3.2 L11 3.6 V12.6 L1 13.4 Z" fill="#222"/><path d="M1.6 4 L10.4 4.3 V11.6 L1.6 12.3 Z" fill="url(#mg)"/><rect x="4.5" y="13" width="2" height="1.5" fill="#333"/><path d="M1 14.6 L9.5 14 L11.8 15.8 L1.2 17 Z" fill="#222"/><path d="M12.6 3.2 L19 .8 V14.6 L16.5 16.4 L12.6 15 Z" fill="#1e1e1e"/></svg></div>
<div style="position:absolute;left:621.3px;top:174.3px;width:1px;height:92px;background:#8dbbfa"></div>
<div style="position:absolute;left:692.5px;top:174.3px;width:1px;height:92px;background:#8dbbfa"></div>
<div style="position:absolute;left:699.0px;top:178.3px;width:27px;height:16px;border-radius:2.5px;background:#1b7ef2"></div>
<div class="a" style="left:703.0px;top:182.3px;font-size:10px;color:#fff;font-weight:normal;transform:scale(0.95);transform-origin:0 0;">销售</div>
<div style="position:absolute;left:751.8px;top:174.3px;width:1px;height:92px;background:#8dbbfa"></div>
<div style="position:absolute;left:758.3px;top:178.3px;width:27px;height:16px;border-radius:2.5px;background:#16b4d0"></div>
<div class="a" style="left:762.3px;top:182.3px;font-size:10px;color:#fff;font-weight:normal;transform:scale(0.95);transform-origin:0 0;">生产</div>
<div style="position:absolute;left:0;top:266.3px;width:776px;height:40px;background:#f3f7fe;border-top:1px solid #8dbbfa"></div>
<div style="position:absolute;left:0px;top:266.3px;width:1px;height:40px;background:#8dbbfa"></div>
<div class="a" style="left:7.3px;top:274.3px;font-size:9px;color:#606269;font-weight:normal;">示例：上海帆软</div>
<div style="position:absolute;left:82.39999999999998px;top:266.3px;width:1px;height:40px;background:#8dbbfa"></div>
<div class="a" style="left:89.7px;top:274.3px;font-size:9px;color:#606269;font-weight:normal;"><span style="font-size:8.5px;letter-spacing:-0.3px">BJ230927-07</span></div>
<div style="position:absolute;left:154px;top:266.3px;width:1px;height:40px;background:#8dbbfa"></div>
<div class="a" style="left:161.3px;top:274.3px;font-size:9px;color:#606269;font-weight:normal;"><span style="font-size:8.5px;letter-spacing:-0.3px">A0012</span></div>
<div style="position:absolute;left:210.29999999999995px;top:266.3px;width:1px;height:40px;background:#8dbbfa"></div>
<div class="a" style="left:217.6px;top:274.3px;font-size:9px;color:#606269;font-weight:normal;">组件</div>
<div style="position:absolute;left:269.5px;top:266.3px;width:1px;height:40px;background:#8dbbfa"></div>
<div class="a" style="left:276.8px;top:274.3px;font-size:9px;color:#606269;font-weight:normal;"><span style="font-size:8.5px;letter-spacing:-0.3px">DELL</span>主机</div>
<div style="position:absolute;left:339.70000000000005px;top:266.3px;width:1px;height:40px;background:#8dbbfa"></div>
<div class="a" style="left:347.0px;top:274.3px;font-size:9px;color:#606269;font-weight:normal;">主机</div>
<div style="position:absolute;left:397px;top:266.3px;width:1px;height:40px;background:#8dbbfa"></div>
<div class="a" style="left:404.3px;top:274.3px;font-size:9px;color:#606269;font-weight:normal;"><span style="font-size:8.5px;letter-spacing:-0.3px">DELL</span></div>
<div style="position:absolute;left:450.29999999999995px;top:266.3px;width:1px;height:40px;background:#8dbbfa"></div>
<div class="a" style="left:457.6px;top:274.3px;font-size:9px;color:#606269;font-weight:normal;"><span style="font-size:8.5px;letter-spacing:-0.3px">QTP-300</span></div>
<div style="position:absolute;left:513.5px;top:266.3px;width:1px;height:40px;background:#8dbbfa"></div>
<div class="a" style="left:520.8px;top:274.3px;font-size:9px;color:#606269;font-weight:normal;">台</div>
<div style="position:absolute;left:559.4px;top:266.3px;width:1px;height:40px;background:#8dbbfa"></div>
<div style="position:absolute;left:621.3px;top:266.3px;width:1px;height:40px;background:#8dbbfa"></div>
<div style="position:absolute;left:692.5px;top:266.3px;width:1px;height:40px;background:#8dbbfa"></div>
<div style="position:absolute;left:751.8px;top:266.3px;width:1px;height:40px;background:#8dbbfa"></div>
<div style="position:absolute;left:758.3px;top:270.3px;width:27px;height:16px;border-radius:2.5px;background:#16b4d0"></div>
<div class="a" style="left:762.3px;top:274.3px;font-size:10px;color:#fff;font-weight:normal;transform:scale(0.95);transform-origin:0 0;">生产</div>
<div style="position:absolute;left:775px;top:0;width:1px;height:286px;background:#8dbbfa"></div>
<div style="position:absolute;left:0.6px;top:280.2px;width:399.4px;height:5.5px;border-radius:3px;background:#c0c2c7"></div>
</div>
<div class="a" style="left:1181px;top:212px;width:5.5px;height:286px;background:#fff"></div>
<div class="a" style="left:1181px;top:212.4px;width:5px;height:55px;border-radius:2.5px;background:#c0c1c6"></div>
<div class="a" style="left:405px;top:212px;width:782px;height:317px;border:1px solid #9dc3fa;border-top:none"></div>
<div class="a" style="left:405px;top:497.5px;width:782px;height:1px;background:#86b5f8"></div>
<div class="a" style="left:412px;top:503px;width:21px;height:20.5px;border:1px solid #93bbf7;border-radius:3px;background:#fff"></div>
<svg class="a" style="left:418px;top:508.5px" width="9" height="9" viewBox="0 0 9 9" fill="none" stroke="#666" stroke-width=".9"><rect x=".5" y=".5" width="8" height="8" rx="1.2"/><path d="M4.5 2.3v4.4M3.2 2.3h2.6M3.2 6.7h2.6"/></svg>
<div class="a" style="left:436.5px;top:503px;width:74px;height:20.5px;border:1px solid #93bbf7;border-radius:3px;background:#fff"></div>
<div class="a" style="left:443px;top:509px;font-size:10px;color:#4b4d55;font-weight:normal;transform:scale(0.93);transform-origin:0 0;"><span style="font-size:9.5px;letter-spacing:-0.4px">100 </span>条<span style="font-size:9.5px;letter-spacing:-0.4px">/</span>页</div>
<svg class="a" style="left:495.5px;top:510.5px" width="8" height="6" viewBox="0 0 8 6"><path d="M.7 1 4 4.3 7.3 1" stroke="#444" stroke-width="1" fill="none"/></svg>
<div class="a" style="left:515.5px;top:509px;font-size:10px;color:#4b4d55;font-weight:normal;transform:scale(0.93);transform-origin:0 0;">共<span style="font-size:9.5px;letter-spacing:-0.4px"> 22 </span>条</div>
<div class="a" style="left:1094px;top:503px;width:20.6px;height:20.6px;border:1px solid #a6c7f8;border-radius:3px;background:#f3f4f6"></div>
<svg class="a" style="left:1102px;top:509px" width="5" height="9" viewBox="0 0 5 9"><path d="M4 .8 .9 4.5 4 8.2" stroke="#b5b8bf" stroke-width=".9" fill="none"/></svg>
<div class="a" style="left:1117.2px;top:503px;width:22.2px;height:20.6px;border:1px solid #a6c7f8;border-radius:3px;background:#fff;font-size:10px;color:#444;text-align:center;line-height:19px">1</div>
<div class="a" style="left:1142px;top:509px;font-size:10px;color:#4b4d55;font-weight:normal;">/ 1</div>
<div class="a" style="left:1158.5px;top:503px;width:21px;height:20.6px;border:1px solid #a6c7f8;border-radius:3px;background:#f3f4f6"></div>
<svg class="a" style="left:1166.5px;top:509px" width="5" height="9" viewBox="0 0 5 9"><path d="M1 .8 4.1 4.5 1 8.2" stroke="#b5b8bf" stroke-width=".9" fill="none"/></svg>
<svg class="a" style="left:0;top:0" width="1200" height="726" viewBox="0 0 1200 726" fill="none" stroke="#ececee" stroke-width="1.3"><path d="M0.6 7 Q0.6 0.6 7 0.6"/><path d="M1199.4 719 Q1199.4 725.4 1193 725.4"/></svg>
</div></body></html>
